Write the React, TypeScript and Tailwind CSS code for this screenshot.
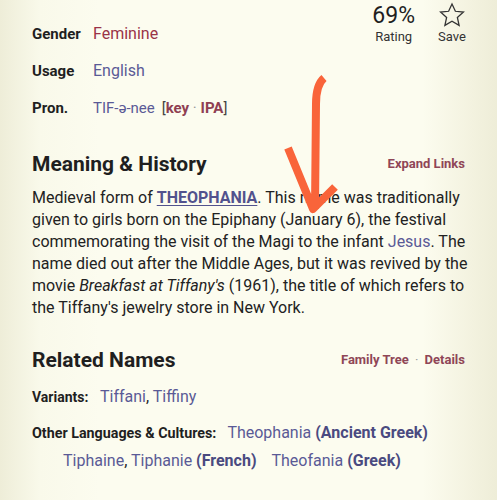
import React from 'react';

const Arrow: React.FC = () => (
    <svg className="absolute left-0 top-0 pointer-events-none" width="497" height="500" viewBox="0 0 497 500">
        <path
            d="M324 78 C318 83 316 92 316 104 L315 209 M288 148 L313 209 L335 187"
            fill="none"
            stroke="#f9643a"
            strokeWidth={8}
            strokeLinecap="butt"
            strokeLinejoin="round"
        />
    </svg>
);

const App: React.FC = () => {
    return (
        <div
            className="relative w-[497px] h-[500px] overflow-hidden text-[#1f1f1f] bg-[linear-gradient(to_right,#eeedd8,#f9f9ea_8%,#fcfcef_20%,#fcfcef_85%,#f3f2df_95%,#eeedd8)]"
            style={{ fontFamily: 'Roboto, "Noto Sans", sans-serif' }}
        >
            <div className="px-8">
                <div className="flex justify-between">
                    <div className="pt-[22px] flex flex-col gap-[13px]">
                        <div className="flex items-center h-6">
                            <span className="w-[61px] text-[15px] font-bold">Gender</span>
                            <span className="text-[16px] text-[#9a3347]">Feminine</span>
                        </div>
                        <div className="flex items-center h-6">
                            <span className="w-[61px] text-[15px] font-bold">Usage</span>
                            <span className="text-[16px] text-[#5a5a96]">English</span>
                        </div>
                        <div className="flex items-center h-6">
                            <span className="w-[61px] text-[15px] font-bold">Pron.</span>
                            <span className="text-[15px] text-[#5a5a96]">TIF-ə-nee</span>
                            <span className="ml-[7px] text-[15px] font-bold text-[#8f3f52]">
                                <span className="text-[#444] font-normal">[</span>key <span className="text-[#999] font-normal">·</span> IPA<span className="text-[#444] font-normal">]</span>
                            </span>
                        </div>
                    </div>
                    <div className="flex gap-[23px] -mr-[1px]">
                        <div className="flex flex-col items-center">
                            <span className="text-[23px] leading-[24px] mt-[4px]">69%</span>
                            <span className="text-[13px] leading-[16px] text-[#333] mt-[1px]">Rating</span>
                        </div>
                        <div className="flex flex-col items-center">
                            <svg width="28" height="28" viewBox="0 0 24 24" className="mt-[1px]">
                                <path
                                    d="M12 2.5l2.9 6.3 6.9.7-5.2 4.6 1.5 6.8L12 17.4l-6.1 3.5 1.5-6.8-5.2-4.6 6.9-.7z"
                                    fill="none"
                                    stroke="#333"
                                    strokeWidth={1.1}
                                    strokeLinejoin="miter"
                                />
                            </svg>
                            <span className="text-[13px] leading-[16px] text-[#333]">Save</span>
                        </div>
                    </div>
                </div>

                <div className="mt-[30px] flex items-center justify-between">
                    <h2 className="text-[21px] font-bold leading-7">Meaning &amp; History</h2>
                    <span className="text-[13px] font-bold text-[#8f4657]">Expand Links</span>
                </div>
                <p className="mt-[9px] w-[440px] text-[16px] leading-[22px] text-[#222]">
                    Medieval form of <span className="font-bold underline text-[#52528d] underline-offset-2">THEOPHANIA</span>. This name was traditionally given to girls born on the Epiphany (January 6), the festival commemorating the visit of the Magi to the infant <span className="text-[#5a5a96]">Jesus</span>. The name died out after the Middle Ages, but it was revived by the movie <i>Breakfast at Tiffany's</i> (1961), the title of which refers to the Tiffany's jewelry store in New York.
                </p>

                <div className="mt-[27px] flex items-center justify-between">
                    <h2 className="text-[21px] font-bold leading-7">Related Names</h2>
                    <span className="text-[13px] font-bold text-[#8f4657]">
                        Family Tree <span className="text-[#999] font-normal mx-[3px]">·</span> Details
                    </span>
                </div>
                <div className="mt-[11px] flex items-center">
                    <span className="text-[14px] font-bold w-[68px]">Variants:</span>
                    <span className="text-[16px] text-[#5a5a96]">Tiffani<span className="text-[#222]">,</span> Tiffiny</span>
                </div>
                <div className="mt-[10px] text-[16px] leading-[27px] text-[#5a5a96]">
                    <span className="text-[14.3px] font-bold text-[#1f1f1f] mr-[11px]">Other Languages &amp; Cultures:</span>
                    Theophania <b className="text-[#4a4a80]">(Ancient Greek)</b>
                    <br />
                    <span className="ml-[31px]">Tiphaine<span className="text-[#222]">,</span> Tiphanie <b className="text-[#4a4a80]">(French)</b></span>
                    <span className="ml-[15px]">Theofania <b className="text-[#4a4a80]">(Greek)</b></span>
                </div>
            </div>
            <Arrow />
        </div>
    );
};

export default App;
